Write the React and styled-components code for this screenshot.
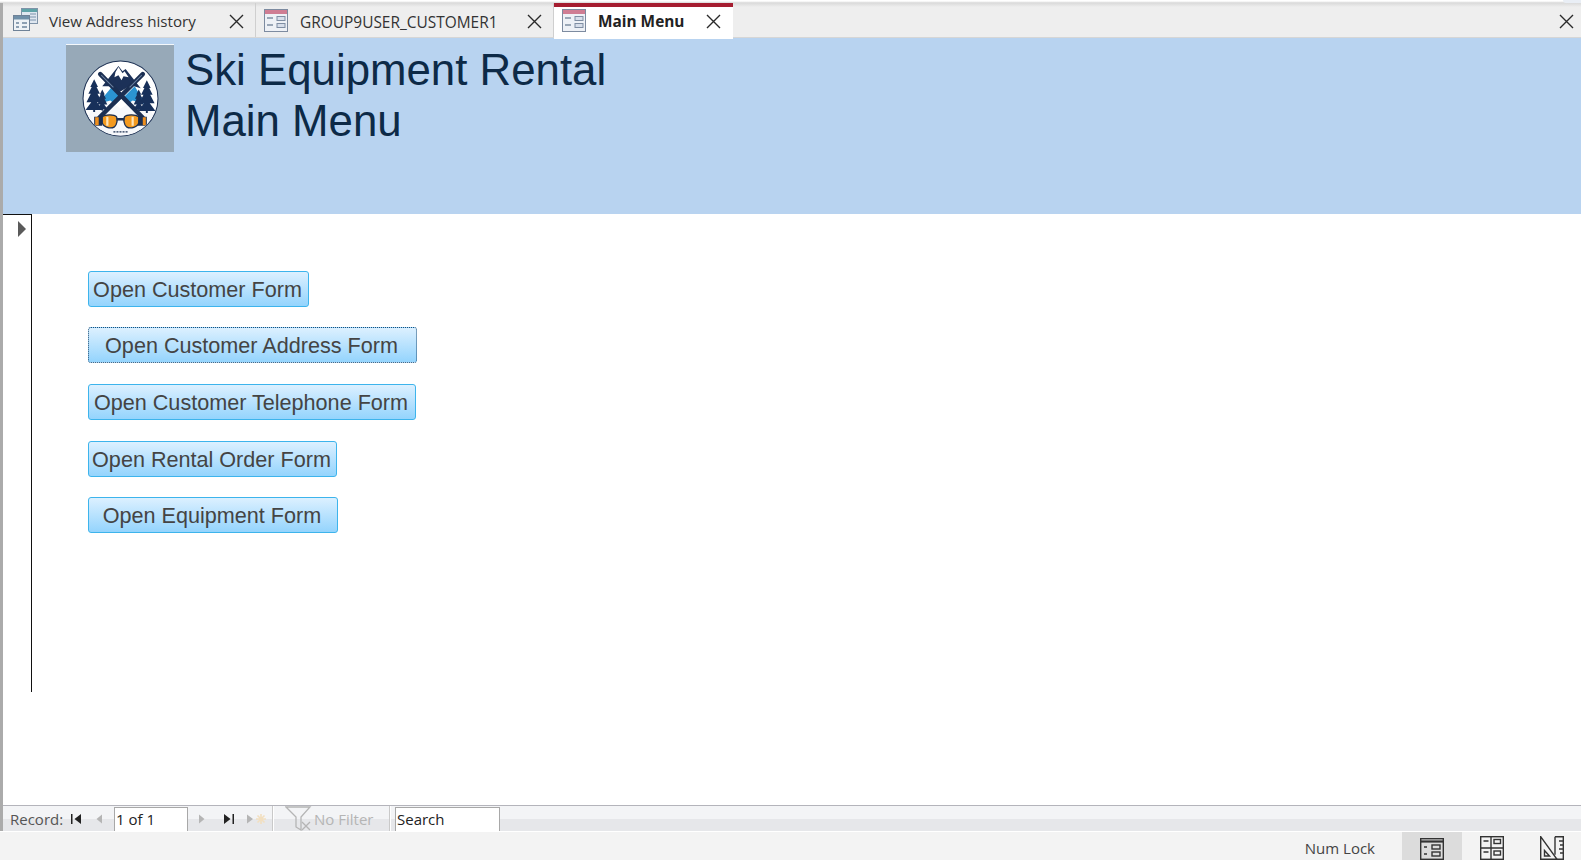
import React from "react";
import styled, { createGlobalStyle } from "styled-components";

const Global = createGlobalStyle`
  html, body { margin: 0; padding: 0; background: #fff; overflow: hidden; }
  #root { width: 1581px; height: 860px; }
`;

const Page = styled.div`
  width: 1581px; height: 860px; display: flex; flex-direction: column; overflow: hidden;
  font-family: "Open Sans", "Noto Sans", sans-serif; background: #fff;
`;
const TopEdge = styled.div`
  height: 3px; flex: none; position: relative;
  background: linear-gradient(#fff 0, #fff 1px, #ececec 2px, #d4d4d4 3px);
  &::after {
    content: ""; position: absolute; right: 0; top: 0; width: 18px; height: 3px;
    background: #e9eef5; border-bottom-left-radius: 3px;
  }
`;
const Workspace = styled.div`
  flex: 1; min-height: 0; display: flex; flex-direction: column;
  border-left: 3px solid #ababab;
`;
const TabBar = styled.div`
  height: 35px; flex: none; display: flex; align-items: flex-start;
  background: linear-gradient(#dadada 0, #eeeeee 4px, #eeeeee 100%);
  border-bottom: 1px solid #d6d6d6; box-sizing: border-box; position: relative;
`;
const Tab = styled.div`
  width: ${p => p.$w}px; flex: none; box-sizing: border-box; display: flex; align-items: center;
  padding: 0 ${p => p.$right}px ${p => (p.$active ? 6 : 0)}px ${p => p.$pad}px;
  font-size: ${p => p.$size}px; color: ${p => (p.$active ? "#222" : "#333")};
  font-weight: ${p => (p.$active ? 700 : 400)};
  background: ${p => (p.$active ? "#fff" : "transparent")};
  border-top: ${p => (p.$active ? "4px solid #a51d30" : "0")};
  border-right: ${p => (p.$active ? "0" : "1px solid #cfcfcf")};
  height: ${p => (p.$active ? "36px" : "34px")};
  position: relative;
`;
const TabLabel = styled.span` margin-left: ${p => p.$gap}px; flex: 1; white-space: nowrap; padding-top: ${p => p.$top}px; `;
const TabClose = styled.span` display: block; flex: none; padding-top: 3px; `;
const CloseAll = styled.div`
  position: absolute; right: 7px; top: 11px; width: 15px; height: 15px;
`;
const Header = styled.header`
  height: 176px; flex: none; box-sizing: border-box; background: #b8d3f0;
  display: flex; align-items: flex-start; padding: 6px 0 0 63px; gap: 11px;
`;
const LogoTile = styled.div`
  width: 108px; height: 108px; flex: none; background: #97a9b8; border-top: 1px solid #f4f8fc;
  box-sizing: border-box; display: flex; align-items: center; justify-content: center;
`;
const Title = styled.h1`
  margin: 0; font: 400 43.8px/51px "Liberation Sans", Arial, sans-serif; color: #0d2a47;
`;
const Body = styled.main` flex: 1; min-height: 0; display: flex; align-items: flex-start; `;
const Selector = styled.div`
  width: 28px; height: 471px; flex: none;
  border-top: 1px solid #111; border-right: 1px solid #111;
  padding: 6px 0 0 0;
`;
const Arrow = styled.div`
  width: 0; height: 0; margin-left: 15px;
  border-left: 8px solid #5a5a5a; border-top: 8px solid transparent; border-bottom: 8px solid transparent;
`;
const Buttons = styled.div`
  display: flex; flex-direction: column; padding: 57px 0 0 56px; align-items: flex-start;
`;
const MenuButton = styled.button`
  width: ${p => p.$w}px; height: 36px; margin-bottom: ${p => p.$mb}px; padding: 1px 2px 0 0; box-sizing: border-box;
  font: 400 21.6px/1 "Liberation Sans", Arial, sans-serif; color: #444; white-space: nowrap;
  border-radius: 3px; background: linear-gradient(#dcf0ff, #94d4fd);
  border: 1px ${p => (p.$focus ? "dotted #1d4f78" : "solid #3db4ec")};
`;
const NavBar = styled.div`
  height: 26px; flex: none; box-sizing: border-box; border-top: 1px solid #b4b4bb;
  background: linear-gradient(#f3f4f6 0, #f3f4f6 50%, #e6e7ea 50%, #e6e7ea 100%);
  display: flex; align-items: center; font-size: 15px; color: #555;
`;
const NavLabel = styled.span` margin-left: 7px; width: 56px; `;
const NavIcon = styled.svg` flex: none; margin-left: ${p => p.$ml || 0}px; `;
const NavInput = styled.div`
  width: 74px; height: 24px; box-sizing: border-box; background: #fff; border: 1px solid #a8a8a8;
  font-size: 15px; color: #222; padding-left: 1px; line-height: 22px; flex: none; margin-left: ${p => p.$ml || 0}px;
  align-self: flex-end; border-bottom: 0;
`;
const SearchBox = styled(NavInput)` width: 105px; `;
const NavSep = styled.div`
  width: 1px; height: 100%; flex: none; background: #fff; border-left: 1px solid #c9c9c9; margin-left: ${p => p.$ml}px;
`;
const NoFilter = styled.span` color: #b5b5b5; margin-left: 2px; width: 60px; white-space: nowrap; `;
const StatusBar = styled.footer`
  height: 29px; flex: none; background: #f3f3f3; display: flex; align-items: center; justify-content: flex-end;
  font-size: 15px; color: #444; border-top: 1px solid #fff; box-sizing: border-box;
`;
const StatusText = styled.span` margin-right: 27px; padding-top: 3px; `;
const ViewBtn = styled.div`
  width: 60px; height: 100%; display: flex; align-items: center; justify-content: center; flex: none;
  box-sizing: border-box; padding-top: 3px;
  background: ${p => (p.$on ? "#dcdcdc" : "transparent")};
`;
const ViewGroup = styled.div` display: flex; height: 100%; margin-right: -1px; `;

const X = ({ size = 15 }) => (
  <svg width={size} height={size} viewBox="0 0 15 15" style={{ flex: "none", display: "block" }}>
    <path d="M1 1 14 14M14 1 1 14" stroke="#2a2a2a" strokeWidth="1.4" fill="none" />
  </svg>
);

const FormIcon = () => (
  <svg width="24" height="23" viewBox="0 0 24 23" style={{ flex: "none" }}>
    <rect x=".5" y=".5" width="23" height="22" fill="#eef1f6" stroke="#7d8ba0" />
    <rect x="1" y="1" width="22" height="4" fill="#cf7d93" />
    <path d="M3 9h6M3 16h6" stroke="#7f8ea3" strokeWidth="1.5" />
    <rect x="13" y="7.5" width="8" height="4" fill="#d7deea" stroke="#7f8ea3" />
    <rect x="13" y="14.5" width="8" height="4" fill="#d7deea" stroke="#7f8ea3" />
  </svg>
);

const QueryIcon = () => (
  <svg width="25" height="24" viewBox="0 0 25 24" style={{ flex: "none" }}>
    <rect x="8.5" y=".5" width="16" height="15" fill="#dfe7f0" stroke="#7f93a8" />
    <rect x="9" y="1" width="15" height="3" fill="#5fa3a8" />
    <path d="M17 6h6M17 9h6M17 12h6" stroke="#9db0c2" strokeWidth="1.5" />
    <rect x=".5" y="7.5" width="16" height="15" fill="#eef2f6" stroke="#6f8297" />
    <rect x="1" y="8" width="15" height="3.5" fill="#6f8fa8" />
    <path d="M3 14h3v2H3zM9 14h5v2H9zM3 18h3v2H3zM9 18h5v2H9z" fill="#8da0b3" />
  </svg>
);

const Tree = ({ x, y, s = 1 }) => (
  <path
    transform={`translate(${x} ${y}) scale(${s})`}
    d="M0 0 4 8H2.5L6 15H3.5L8 24H3L9 32H1V34H-1V32H-9L-3 24H-8L-3.5 15H-6L-2.5 8H-4Z"
    fill="#17305a"
  />
);

const Logo = () => (
  <svg width="77" height="77" viewBox="0 0 76 76">
    <defs><clipPath id="disc"><circle cx="38" cy="38" r="36.5" /></clipPath></defs>
    <circle cx="38" cy="38" r="37" fill="#fff" stroke="#1b2f52" strokeWidth="1" />
    <g clipPath="url(#disc)">
      <path d="M20 26 36 6l4 5 3-2 15 19-10-3-10 6-10-5z" fill="#1c3158" />
      <path d="M33 12l3-5 4 6 2-2 4 6-5-1-2 4-3-5-4 2z" fill="#fff" />
      <path d="M15 44 30 26l9 12-6 6zM40 38l12-12 11 18-12 2z" fill="#2b94d2" />
      <path d="M1 62 14 44l14-4 10 8 12-8 14 4 11 18v14H1z" fill="#f6f8fb" />
      <Tree x={12} y={19} s={0.95} />
      <Tree x={20} y={29} s={0.62} />
      <Tree x={64} y={20} s={0.95} />
      <Tree x={56} y={29} s={0.62} />
      <path d="M18 14 60 57M60 14 17 57" stroke="#1b2f52" strokeWidth="4.5" strokeLinecap="round" fill="none" />
      <path d="M19 15 31 27M59 15 47 27" stroke="#6b81a0" strokeWidth="1" fill="none" />
      <path d="M12 56h8v9h-8zM55 56h9v9h-9z" fill="#1b2f52" />
      <path d="M13 56.500h3.500v8H13zM60 56.500h3v8h-3z" fill="#ef8f1d" />
      <path d="M20 56c3-2.500 12-2.500 14 0 1.500 2 .5 8-2 10-4 2.500-11 0-12-4z" fill="#f39a1f" stroke="#1b2f52" strokeWidth="1.3" />
      <path d="M56 56c-3-2.500-12-2.500-14 0-1.500 2-.5 8 2 10 4 2.500 11 0 12-4z" fill="#f39a1f" stroke="#1b2f52" strokeWidth="1.3" />
      <path d="M25 56v9M50 56v9" stroke="#fde3b8" strokeWidth="2.200" />
      <path d="M34 58.500h8" stroke="#1b2f52" strokeWidth="2.500" />
      <path d="M31 71h15" stroke="#1b2f52" strokeWidth="1.200" strokeDasharray="2 1" />
    </g>
  </svg>
);

const Glyph = ({ d, ml, w = 12, fill = "#222" }) => (
  <NavIcon $ml={ml} width={w} height="14" viewBox={`0 0 ${w} 14`}><path d={d} fill={fill} /></NavIcon>
);

const ViewIcon = ({ kind }) => (
  <svg width="24" height="24" viewBox="0 0 24 24">
    {kind === "form" && (
      <g fill="none" stroke="#333" strokeWidth="1.4">
        <rect x=".7" y="2.700" width="22.600" height="20.600" />
        <path d="M1 5.500h22" strokeWidth="2.200" />
        <path d="M4 11h3M4 18h3" />
        <rect x="12" y="9" width="8" height="4" />
        <rect x="12" y="16" width="8" height="4" />
      </g>
    )}
    {kind === "layout" && (
      <g fill="none" stroke="#333" strokeWidth="1.4">
        <rect x=".7" y=".7" width="22.600" height="22.600" />
        <path d="M11 1v22M1 12h22M3.500 5h5M3.500 16h5" />
        <rect x="14" y="3.500" width="6.500" height="4" />
        <rect x="14" y="15" width="6.500" height="4" />
      </g>
    )}
    {kind === "design" && (
      <g fill="none" stroke="#333" strokeWidth="1.4">
        <path d="M.7 .7 17 23.300H.7z" />
        <path d="M4.500 14.500 9.500 20H4.500z" />
        <path d="M15 .7h8.300v22.600H17M15 .7v18M23 5h-4M23 9h-3M23 13h-4M23 17h-3" />
      </g>
    )}
  </svg>
);

const buttons = [
  { label: "Open Customer Form", w: 221, mb: 20 },
  { label: "Open Customer Address Form", w: 329, mb: 21, focus: true },
  { label: "Open Customer Telephone Form", w: 328, mb: 21 },
  { label: "Open Rental Order Form", w: 249, mb: 20 },
  { label: "Open Equipment Form", w: 250, mb: 0 },
];

export default function App() {
  return (
    <Page>
      <Global />
      <TopEdge />
      <Workspace>
        <TabBar>
          <Tab $w={253} $pad={10} $right={11} $size={15.15}>
            <QueryIcon /><TabLabel $gap={11} $top={1}>View Address history</TabLabel><TabClose><X /></TabClose>
          </Tab>
          <Tab $w={298} $pad={8} $right={11} $size={15.45}>
            <FormIcon /><TabLabel $gap={12} $top={3}>GROUP9USER_CUSTOMER1</TabLabel><TabClose><X /></TabClose>
          </Tab>
          <Tab $w={179} $pad={8} $right={12} $size={15.4} $active>
            <FormIcon /><TabLabel $gap={12} $top={3}>Main Menu</TabLabel><TabClose><X /></TabClose>
          </Tab>
          <CloseAll><X /></CloseAll>
        </TabBar>
        <Header>
          <LogoTile><Logo /></LogoTile>
          <Title>Ski Equipment Rental<br />Main Menu</Title>
        </Header>
        <Body>
          <Selector><Arrow /></Selector>
          <Buttons>
            {buttons.map(b => (
              <MenuButton key={b.label} $w={b.w} $mb={b.mb} $focus={b.focus}>{b.label}</MenuButton>
            ))}
          </Buttons>
        </Body>
        <NavBar>
          <NavLabel>Record:</NavLabel>
          <Glyph ml={5} d="M0 2h1.500v10H0zM10 2v10L3.500 7z" />
          <Glyph ml={10} d="M9 2.500v9L3.500 7z" fill="#b5b5b5" />
          <NavInput $ml={9}>1 of 1</NavInput>
          <Glyph ml={8} d="M3 2.500v9L8.500 7z" fill="#b5b5b5" />
          <Glyph ml={15} d="M1 2v10l6.500-5zM9.500 2H11v10H9.500z" />
          <Glyph ml={11} w={9} d="M1 2.500v9L7 7z" fill="#b5b5b5" />
          <NavIcon width="12" height="14" viewBox="0 0 12 14">
            <path d="M6 2v10M1 7h10M2.500 3.500l7 7M9.500 3.500l-7 7" stroke="#f2dfc0" strokeWidth="1.600" />
          </NavIcon>
          <NavSep $ml={5} />
          <NavIcon $ml={11} width="27" height="25" viewBox="0 0 27 25">
            <path d="M1 1h24l-9 10v13l-5-3V11z" fill="none" stroke="#b5b5b5" strokeWidth="1.300" />
            <path d="M17 16l8 8M25 16l-8 8" stroke="#b5b5b5" strokeWidth="1.300" />
          </NavIcon>
          <NoFilter>No Filter</NoFilter>
          <NavSep $ml={15} />
          <SearchBox $ml={4}>Search</SearchBox>
        </NavBar>
      </Workspace>
      <StatusBar>
        <StatusText>Num Lock</StatusText>
        <ViewGroup>
          <ViewBtn $on><ViewIcon kind="form" /></ViewBtn>
          <ViewBtn><ViewIcon kind="layout" /></ViewBtn>
          <ViewBtn><ViewIcon kind="design" /></ViewBtn>
        </ViewGroup>
      </StatusBar>
    </Page>
  );
}
